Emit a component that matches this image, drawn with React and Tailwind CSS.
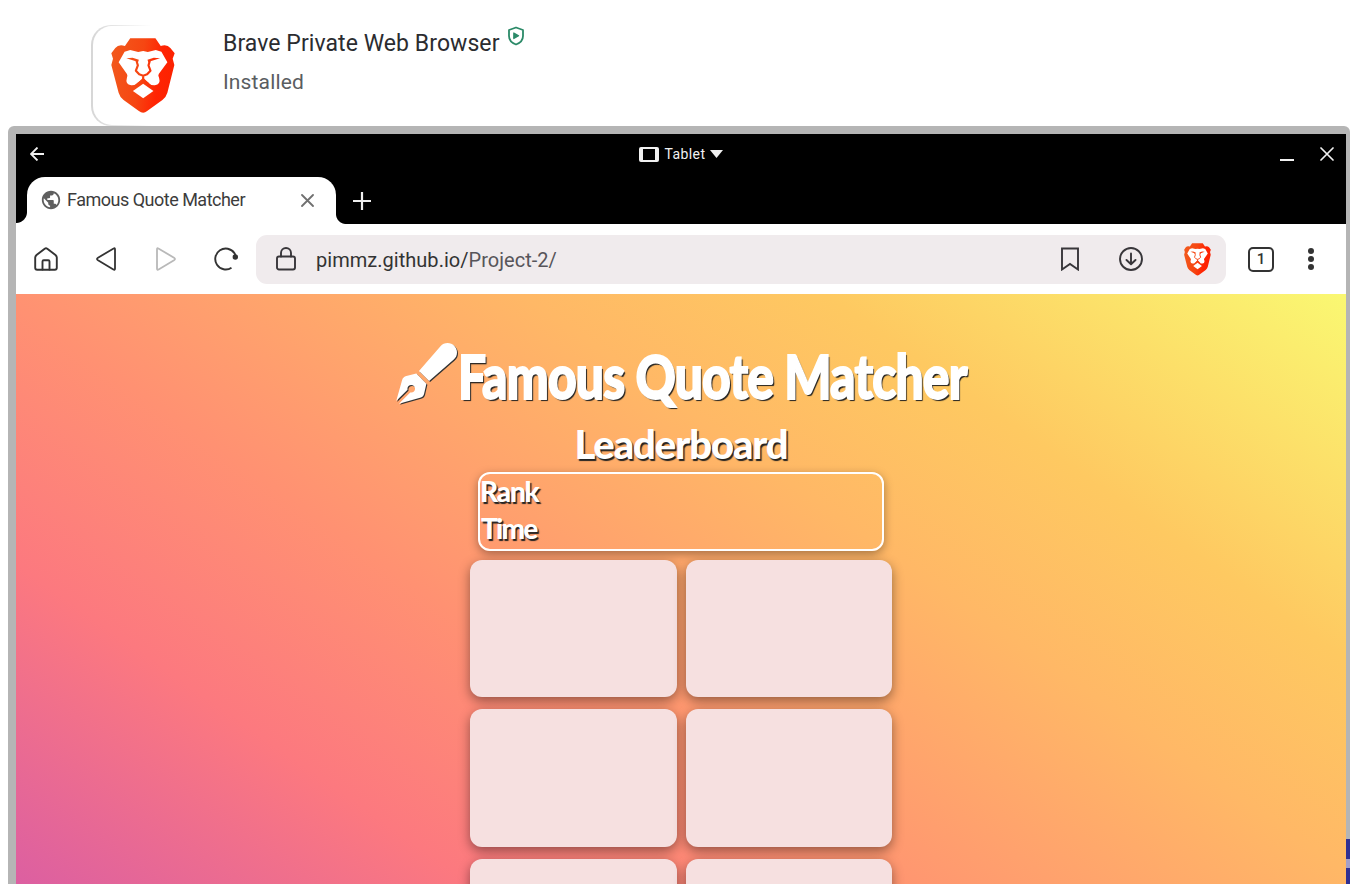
import React from "react";
import { FaPenFancy } from "react-icons/fa6";
import { MdPublic } from "react-icons/md";

function Lion({ className, id }) {
  return (
    <svg className={className} viewBox="93 68 193 228" preserveAspectRatio="none">
      <defs>
        <linearGradient id={id} gradientUnits="userSpaceOnUse" x1="93" x2="286" y1="160" y2="190">
          <stop offset="0" stopColor="#f2581c" />
          <stop offset="0.45" stopColor="#f64612" />
          <stop offset="0.75" stopColor="#ff2403" />
          <stop offset="1" stopColor="#fb2200" />
        </linearGradient>
      </defs>
      <path fill={`url(#${id})`} d="M151 69H227L243 92Q262 86 272 98L285 114L279 130L284 149L263 232Q259 246 248 254L202 287Q190 297 177 287L131 254Q120 246 116 232L94 149L99 130L94 114L106 98Q116 86 135 92Z" />
      <path fill="#fff" d="M134 109L151 104L175 110L190 107L204 110L228 104L245 109L263 141L237 176Q234 181 238 187Q244 207 225 210Q214 211 206 202L190 190L173 202Q164 211 154 210Q135 207 141 187Q144 181 141 176L116 141Z" />
      <path fill={`url(#${id})`} d="M139 129L158 127L177 133L174 142L168 138ZM241 129L222 127L203 133L206 142L212 138Z" />
      <path fill="none" stroke={`url(#${id})`} strokeWidth="6.500" strokeLinejoin="round" d="M170 137L174 150L168 166L178 177L190 181L202 177L212 166L206 150L210 137M190 181V196" />
      <path fill={`url(#${id})`} d="M173 203L190 187L207 203L190 209Z" />
      <path fill="#fff" d="M190 205L221 227L190 249L159 227Z" />
    </svg>
  );
}

function Stroke({ className, width = 2, children, box = "0 0 24 24" }) {
  return (
    <svg className={className} viewBox={box} fill="none" stroke="currentColor" strokeWidth={width} strokeLinecap="round" strokeLinejoin="round">
      {children}
    </svg>
  );
}

function StoreHeader() {
  return (
    <header className="flex h-[126px] shrink-0 items-start pl-[91px] pt-[25px]">
      <div className="flex h-[101px] w-[101px] shrink-0 items-start rounded-[20px] bg-gradient-to-r from-[#d6d6d6] to-white to-60% pl-[2px] pt-px">
        <div className="h-[99px] w-[99px] rounded-[19px] bg-white pl-[18px] pt-[12px]">
          <Lion className="h-[76px] w-[64px]" id="lion-large" />
        </div>
      </div>
      <div className="ml-[31px] pt-px font-['Roboto',sans-serif]">
        <div className="flex h-[34px] items-start">
          <h2 className="w-[277px] whitespace-nowrap pt-px text-[23px] leading-[34px] tracking-[0.07px] text-[#2b2c30]">Brave Private Web Browser</h2>
          <Stroke className="ml-[8px] h-5 w-4 text-[#2b8a68]" box="0 0 16 20" width={1.8}>
            <path d="M8 1.500L15 4v6c0 4-3 7-7 8.500C4 17 1 14 1 10V4Z" />
            <path d="M5.800 7v5.600l4.800-2.800Z" fill="currentColor" strokeWidth="1.2" />
          </Stroke>
        </div>
        <p className="mt-[6px] text-[21px] leading-8 tracking-[0.15px] text-[#5a5d61]">Installed</p>
      </div>
    </header>
  );
}

function WindowBar() {
  return (
    <div className="grid h-[43px] grid-cols-3 items-center pb-[3px] text-[#f1f1f1]">
      <div className="pl-[14px]">
        <Stroke className="h-[14px] w-[14px]" box="0 0 14 14" width={1.8}>
          <path d="M14 7H1M7.500 .5L1 7l6.500 6.500" strokeLinecap="butt" strokeLinejoin="miter" />
        </Stroke>
      </div>
      <div className="flex items-center justify-center">
        <div className="h-[15px] w-[20px] rounded-[2px] border-x-4 border-y-2 border-[#f1f1f1]" />
        <span className="ml-[6px] font-['Roboto',sans-serif] text-[14px] leading-5 tracking-[0.4px]">Tablet</span>
        <svg className="ml-[5px] h-[8px] w-[13px]" viewBox="0 0 13 8"><path d="M0 0H13L6.500 8Z" fill="currentColor" /></svg>
      </div>
      <div className="flex items-center justify-end gap-[26px] pr-[12px]">
        <div className="mt-[11px] h-[2px] w-[14px] bg-[#f1f1f1]" />
        <Stroke className="h-[14px] w-[14px]" box="0 0 14 14" width={1.7}>
          <path d="M1 1L13 13M13 1L1 13" />
        </Stroke>
      </div>
    </div>
  );
}

function TabStrip() {
  return (
    <div className="flex h-[47px] items-end">
      <div className="h-[12px] w-[11px] bg-[radial-gradient(circle_at_0_0,#000_10.5px,#fff_11.5px)]" />
      <div className="flex h-[47px] w-[309px] items-center rounded-t-[18px] bg-white pb-px pl-[13px]">
        <MdPublic className="h-[22px] w-[22px] text-[#5f5f5f]" />
        <span className="ml-[5px] w-[178px] whitespace-nowrap pb-[2px] font-['Roboto',sans-serif] text-[18px] tracking-[-0.5px] text-[#3c3c3c]">Famous Quote Matcher</span>
        <Stroke className="ml-[56px] h-[13px] w-[13px] text-[#707070]" box="0 0 13 13" width={1.8}>
          <path d="M1 1L12 12M12 1L1 12" />
        </Stroke>
      </div>
      <div className="h-[10px] w-[10px] bg-[radial-gradient(circle_at_100%_0,#000_9.5px,#fff_10.5px)]" />
      <Stroke className="mb-[14px] ml-[7px] h-[18px] w-[18px] text-[#eee]" box="0 0 18 18" width={2.2}>
        <path d="M9 0V18M0 9H18" strokeLinecap="butt" />
      </Stroke>
    </div>
  );
}

function Toolbar() {
  return (
    <div className="flex h-[70px] items-center bg-white pl-[18px] text-[#333]">
      <Stroke className="h-6 w-6" width={1.9}>
        <path d="M1.200 10.500v10.300q0 2 2 2H20.800q2 0 2-2V10.500q0-1.500-1.300-2.400L13.300 1.700q-1.300-.9-2.600 0L2.500 8.100Q1.200 9 1.200 10.500Z" />
        <path d="M8.500 22.500V14.500q0-1.200 1.200-1.200h4.600q1.200 0 1.200 1.200v8" />
      </Stroke>
      <Stroke className="ml-[38px] h-6 w-5" box="0 0 20 24" width={1.8}>
        <path d="M17.600 1.500Q19 .6 19 2.500v19q0 1.900-1.600.9L2 13.300Q0 12 2 10.700Z" />
      </Stroke>
      <Stroke className="ml-[40px] h-6 w-5 text-[#b9b9b9]" box="0 0 20 24" width={1.8}>
        <path d="M2.400 1.500Q1 .6 1 2.500v19q0 1.900 1.600.9L18 13.300Q20 12 18 10.700Z" />
      </Stroke>
      <Stroke className="ml-[38px] h-6 w-6" width={1.9}>
        <path d="M17.500 20.800A10.500 10.500 0 1 1 20.500 6.200L22 9.500" strokeLinecap="butt" />
        <circle cx="21.300" cy="10" r="2.700" fill="currentColor" stroke="none" />
      </Stroke>
      <div className="ml-[18px] flex h-[49px] w-[970px] items-center rounded-[11px] bg-[#f0ebed] pl-[20px] text-[#38363a]">
        <Stroke className="h-6 w-5" box="0 0 20 24" width={1.9}>
          <rect x="1" y="9.500" width="18" height="13" rx="2" />
          <path d="M5 9.500V6a5 5 0 0 1 10 0v3.500" />
        </Stroke>
        <div className="ml-[20px] w-[241px] whitespace-nowrap pt-[2px] font-['Roboto',sans-serif] text-[20px] tracking-[0.03px] text-[#333]">
          pimmz.github.io/<span className="text-[#57555a]">Project-2/</span>
        </div>
        <Stroke className="ml-[504px] h-6 w-[18px]" box="0 0 18 24" width={1.9}>
          <path d="M1 1.500H17V22.500L9 17L1 22.500Z" strokeLinejoin="miter" />
        </Stroke>
        <Stroke className="ml-[40px] h-6 w-6" width={1.9}>
          <circle cx="12" cy="12" r="11" />
          <path d="M12 6.500V17M7.500 13L12 17.300L16.500 13" />
        </Stroke>
        <Lion className="ml-[41px] h-[33px] w-[27px]" id="lion-small" />
      </div>
      <div className="ml-[22px] flex h-[25px] w-[26px] items-center justify-center rounded-[5px] border-2 border-[#333] font-['Roboto',sans-serif] text-[15px] font-medium">1</div>
      <div className="ml-[34px] flex flex-col gap-[2.500px]">
        <i className="h-[5.500px] w-[5.500px] rounded-full bg-[#333]" />
        <i className="h-[5.500px] w-[5.500px] rounded-full bg-[#333]" />
        <i className="h-[5.500px] w-[5.500px] rounded-full bg-[#333]" />
      </div>
    </div>
  );
}

function Game() {
  return (
    <main className="flex h-[590px] flex-col items-center overflow-hidden bg-[linear-gradient(35deg,#dc5fa1,#fc797f_21%,#ff9172_38%,#ffb866_62%,#fec961_76%,#faf872)] font-['Lato',sans-serif] text-white">
      <h1 className="flex h-[126px] w-[570px] shrink-0 items-start pt-[49px] text-[60px] font-black leading-[66px] [text-shadow:2px_2px_1px_#222]">
        <FaPenFancy className="h-[61px] w-[61px] shrink-0 drop-shadow-[1.5px_1.5px_0.5px_#333]" />
        <span className="ml-px origin-left scale-x-[0.83] whitespace-nowrap tracking-[-1px] [-webkit-text-stroke:1.8px_white]">Famous Quote Matcher</span>
      </h1>
      <h2 className="h-[52px] shrink-0 whitespace-nowrap text-[40px] font-black leading-[49px] tracking-[-1.1px] [text-shadow:1.5px_1.5px_1px_#222]">Leaderboard</h2>
      <div className="h-[79px] w-[406px] shrink-0 rounded-[12px] border-2 border-white text-[28px] font-black leading-[37px] shadow-[0_3px_10px_rgba(0,0,0,0.35)] [text-shadow:1.5px_1.5px_1px_#222]">
        <p className="-mt-px tracking-[-1.2px]">Rank</p>
        <p className="pl-px tracking-[-1.800px]">Time</p>
      </div>
      <div className="mt-[9px] grid shrink-0 grid-cols-[207px_206px] grid-rows-[137px_138px_138px] gap-x-[9px] gap-y-[12px]">
        {[0, 1, 2, 3, 4, 5].map((n) => (
          <div key={n} className="rounded-[12px] bg-[#f6e0e0] shadow-[0_4px_12px_rgba(0,0,0,0.42)]" />
        ))}
      </div>
    </main>
  );
}

export default function App() {
  return (
    <div className="flex h-[884px] w-[1350px] flex-col overflow-hidden bg-white">
      <StoreHeader />
      <div className="ml-[8px] flex h-[758px] rounded-t-[6px] bg-[#b5b5b5] pl-[8px] pt-[8px]">
        <div className="w-[1330px] shrink-0 bg-black">
          <WindowBar />
          <TabStrip />
          <Toolbar />
          <Game />
        </div>
        <div className="flex w-[4px] flex-col justify-end">
          <div className="h-[20px] bg-[#303092]" />
          <div className="h-[9px] bg-[#a5a0c8]" />
          <div className="h-[16px] bg-[#303092]" />
        </div>
      </div>
    </div>
  );
}
